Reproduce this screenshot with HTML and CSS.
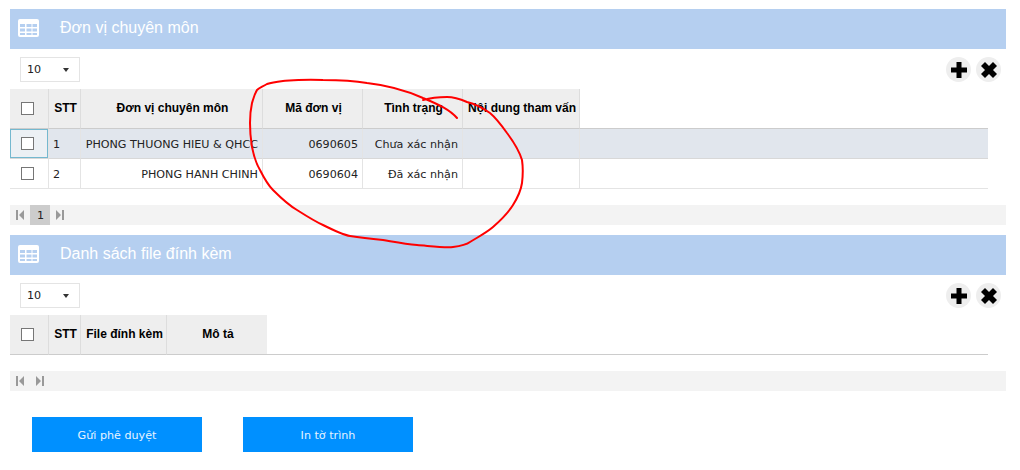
FILE: index.html
```html
<!DOCTYPE html>
<html lang="vi">
<head>
<meta charset="utf-8">
<title>Đơn vị chuyên môn</title>
<link rel="stylesheet" href="styles.css">
</head>
<body>
<main class="page">
  <section class="panel">
    <header class="panel-head">
      <svg class="grid-icon" viewBox="0 0 21 18"><path fill="#fff" fill-rule="evenodd" d="M2 0h17a2 2 0 0 1 2 2v14a2 2 0 0 1-2 2H2a2 2 0 0 1-2-2V2a2 2 0 0 1 2-2zM2 5v3h5V5zm6.500 0v3h5V5zm6 0v3H19V5zM2 9.500v3h5v-3zm6.500 0v3h5v-3zm6 0v3H19v-3zM2 14v2h5v-2zm6.500 0v2h5v-2zm6 0v2H19v-2z"/></svg>
      <h2 class="panel-title">Đơn vị chuyên môn</h2>
    </header>
    <div class="toolbar">
      <div class="select"><span>10</span><i class="caret"></i></div>
      <div class="actions">
        <span class="round"><svg viewBox="0 0 16 16"><path d="M5.500 0h5v5.500H16v5h-5.500V16h-5v-5.500H0v-5h5.500z"/></svg></span>
        <span class="round"><svg viewBox="0 0 16 16"><path d="M4 0 8 4l4-4 4 4-4 4 4 4-4 4-4-4-4 4-4-4 4-4-4-4z"/></svg></span>
      </div>
    </div>
    <table class="grid">
      <colgroup><col class="c-check"><col class="c-stt"><col class="c-unit"><col class="c-code"><col class="c-state"><col class="c-note"><col></colgroup>
      <thead>
        <tr><th><span class="box"></span></th><th>STT</th><th>Đơn vị chuyên môn</th><th>Mã đơn vị</th><th>Tình trạng</th><th class="nowrap">Nội dung tham vấn</th><th class="blank"></th></tr>
      </thead>
      <tbody>
        <tr class="selected"><td class="focus"><span class="box"></span></td><td>1</td><td class="right nowrap">PHONG THUONG HIEU &amp; QHCC</td><td class="right">0690605</td><td class="right">Chưa xác nhận</td><td></td><td class="blank"></td></tr>
        <tr><td><span class="box"></span></td><td>2</td><td class="right nowrap">PHONG HANH CHINH</td><td class="right">0690604</td><td class="right">Đã xác nhận</td><td></td><td class="blank"></td></tr>
      </tbody>
    </table>
    <nav class="pager">
      <svg class="nav-icon" viewBox="0 0 8 10"><path d="M0 0h2v10H0zM8 0v10L3 5z"/></svg>
      <span class="page-num">1</span>
      <svg class="nav-icon" viewBox="0 0 8 10"><path d="M8 0H6v10h2zM0 0v10l5-5z"/></svg>
    </nav>
  </section>

  <section class="panel">
    <header class="panel-head">
      <svg class="grid-icon" viewBox="0 0 21 18"><path fill="#fff" fill-rule="evenodd" d="M2 0h17a2 2 0 0 1 2 2v14a2 2 0 0 1-2 2H2a2 2 0 0 1-2-2V2a2 2 0 0 1 2-2zM2 5v3h5V5zm6.500 0v3h5V5zm6 0v3H19V5zM2 9.500v3h5v-3zm6.500 0v3h5v-3zm6 0v3H19v-3zM2 14v2h5v-2zm6.500 0v2h5v-2zm6 0v2H19v-2z"/></svg>
      <h2 class="panel-title">Danh sách file đính kèm</h2>
    </header>
    <div class="toolbar">
      <div class="select"><span>10</span><i class="caret"></i></div>
      <div class="actions">
        <span class="round"><svg viewBox="0 0 16 16"><path d="M5.500 0h5v5.500H16v5h-5.500V16h-5v-5.500H0v-5h5.500z"/></svg></span>
        <span class="round"><svg viewBox="0 0 16 16"><path d="M4 0 8 4l4-4 4 4-4 4 4 4-4 4-4-4-4 4-4-4 4-4-4-4z"/></svg></span>
      </div>
    </div>
    <table class="grid">
      <colgroup><col class="c-check"><col class="c-stt"><col class="c-file"><col class="c-desc"><col></colgroup>
      <thead>
        <tr><th><span class="box"></span></th><th>STT</th><th class="nowrap">File đính kèm</th><th class="last">Mô tả</th><th class="blank"></th></tr>
      </thead>
    </table>
    <nav class="pager">
      <svg class="nav-icon" viewBox="0 0 8 10"><path d="M0 0h2v10H0zM8 0v10L3 5z"/></svg>
      <svg class="nav-icon next" viewBox="0 0 8 10"><path d="M8 0H6v10h2zM0 0v10l5-5z"/></svg>
    </nav>
  </section>

  <div class="buttons">
    <button class="btn">Gửi phê duyệt</button>
    <button class="btn">In tờ trình</button>
  </div>
</main>
<svg class="scribble" viewBox="0 0 1020 470"><path d="M457 118C450 110 440 105 423 98C405 90 385 85 367 83C350 80 325 80 323 80C305 79 295 80 283 81C275 82 270 83 267 84C262 87 259 88 257 90C254 95 253 100 252 103C250 112 250 120 250 123C250 135 251 140 252 147C254 157 257 165 260 170C264 178 268 185 273 190C282 199 290 206 297 210C308 217 316 222 323 225C335 231 343 235 350 236C362 238 372 239 383 240C395 242 405 244 417 245C430 246 445 248 453 247C461 246 466 245 470 242C478 237 486 233 493 227C501 220 508 213 513 205C518 197 521 190 522 183C523 175 523 167 522 160C519 150 513 141 507 133C502 126 496 118 490 113C483 108 475 104 467 102C460 99 453 97 447 97C437 97 430 98 423 100"/></svg>
</body>
</html>
```
FILE: styles.css
```css
* { box-sizing: border-box; }
html, body { margin: 0; background: #fff; }
body { font-family: "DejaVu Sans", Verdana, sans-serif; font-size: 11.15px; color: #222; overflow: hidden; }
.page { width: 996px; margin: 0 0 0 10px; padding-top: 9px; }
.panel { margin-bottom: 10px; }
.panel-head { height: 40px; background: #b5cff0; display: flex; align-items: center; padding: 0 0 2px 8px; }
.grid-icon { width: 21px; height: 18px; flex: none; }
.panel-title { margin: 0 0 0 21px; font: 400 16px "Liberation Sans", Arial, sans-serif; color: #fff; }
.toolbar { height: 40px; display: flex; justify-content: space-between; align-items: flex-start; padding: 8px 5px 0 10px; }
.select { width: 60px; height: 25px; border: 1px solid #e4e4e4; padding: 0 10px 0 6px; display: flex; align-items: center; justify-content: space-between; }
.caret { width: 0; height: 0; border: 3.500px solid transparent; border-top: 4px solid #333; border-bottom: 0; }
.actions { display: flex; gap: 5px; }
.round { width: 25px; height: 25px; border-radius: 50%; background: #eee; display: flex; align-items: center; justify-content: center; }
.round svg { width: 16px; height: 16px; fill: #000; }
.grid { width: 978px; table-layout: fixed; border-collapse: separate; border-spacing: 0; }
.c-check { width: 39px; }
.c-stt { width: 32px; }
.c-unit { width: 182px; }
.c-code { width: 100px; }
.c-state { width: 100px; }
.c-note { width: 117px; }
.c-file { width: 86px; }
.c-desc { width: 100px; }
.grid th { height: 40px; padding: 0 3px 1px 5px; background: #eee; border-right: 1px solid #ddd; border-bottom: 1px solid #ccc; font: 700 12px "Liberation Sans", Arial, sans-serif; color: #000; text-align: center; }
.grid th.last { border-right: 0; }
.grid th.blank { background: #fff; border-right: 0; }
.grid td { height: 30px; padding: 1px 4px 0; border-right: 1px solid #e4e4e4; border-bottom: 1px solid #e4e4e4; }
.grid td.blank { border-right: 0; }
.grid th:first-child { text-align: center; padding: 0 3px 1px 0; }
.grid td:first-child { text-align: center; padding: 0 3px 1px 0; }
.selected td { background: #e1e6ed; border-bottom-color: #d8d8d8; }
.grid .focus { background: #ecf0f4; box-shadow: inset 0 0 0 1px #74b8cf; }
.right { text-align: right; }
.nowrap { white-space: nowrap; overflow: visible; }
.box { display: inline-block; width: 13px; height: 13px; border: 1px solid #767676; background: #fff; vertical-align: middle; }
.pager { margin-top: 16px; height: 20px; background: #f3f3f3; display: flex; align-items: center; padding-left: 6px; }
.nav-icon { width: 8px; height: 10px; fill: #999; flex: none; }
.nav-icon.next { margin-left: 12px; }
.page-num { width: 20px; height: 20px; margin: 0 6px; background: #ccc; display: flex; align-items: center; justify-content: center; padding-left: 1px; color: #222; }
.buttons { display: flex; gap: 41px; padding: 16px 0 0 22px; }
.btn { width: 170px; height: 35px; padding: 1px 0 0; border: 0; background: #0090ff; color: #e8f4ff; font: 400 11.15px "DejaVu Sans", Verdana, sans-serif; }
.scribble { position: absolute; left: 0; top: 0; width: 1020px; height: 470px; pointer-events: none; }
.scribble path { fill: none; stroke: #f00; stroke-width: 2; stroke-linecap: round; }
```
